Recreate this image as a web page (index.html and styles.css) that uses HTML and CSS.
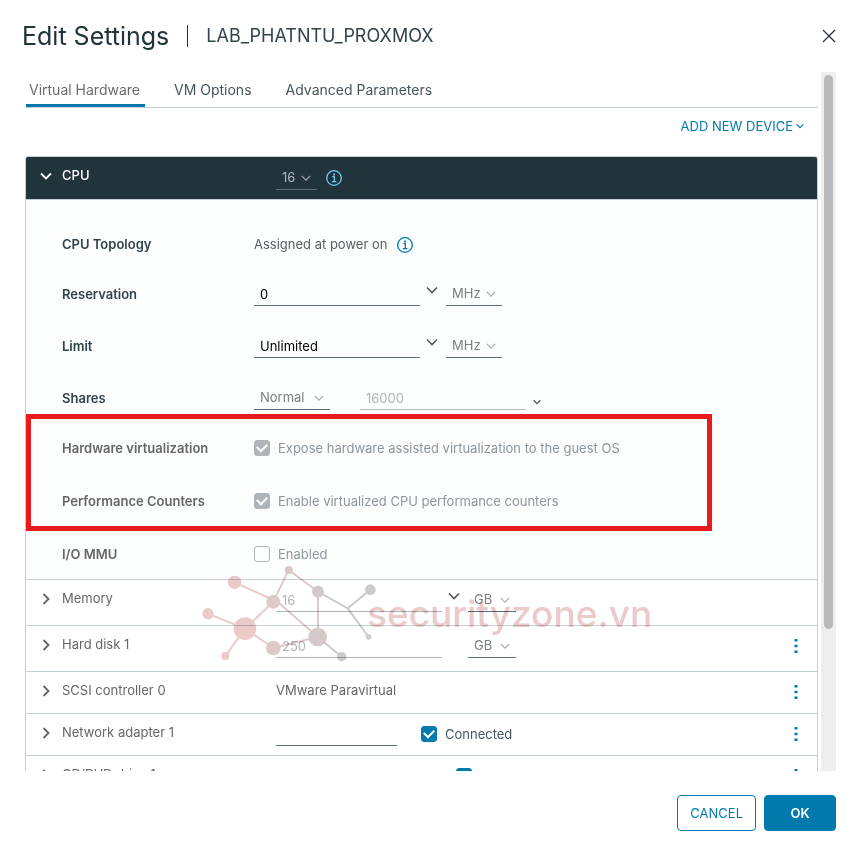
FILE: index.html
```html
<!DOCTYPE html>
<html lang="en">
<head>
<meta charset="utf-8">
<title>Edit Settings</title>
<meta name="viewport" content="width=device-width, initial-scale=1">
<link rel="stylesheet" href="styles.css">
</head>
<body>
<svg class="defs" aria-hidden="true">
  <symbol id="chev" viewBox="0 0 12 12"><path d="M1 3.5 6 8.5 11 3.5"/></symbol>
  <symbol id="info" viewBox="0 0 16 16"><circle cx="8" cy="8" r="7.3"/><path d="M6.3 6.7H8.3V11.5M5.8 11.6H10.4"/><path class="dot" d="M7.2 3.6h1.8v1.8h-1.8z"/></symbol>
  <symbol id="dots" viewBox="0 0 4 16"><path d="M.5 1h3v2.4h-3zM.5 6.8h3v2.4h-3zM.5 12.6h3v2.4h-3z"/></symbol>
</svg>
<main class="dialog">
  <header class="head">
    <h1>Edit Settings</h1>
    <h2>LAB_PHATNTU_PROXMOX</h2>
    <button class="close" aria-label="Close"><svg viewBox="0 0 14 14"><path d="M1 1 13 13M13 1 1 13"/></svg></button>
  </header>

  <div class="body">
    <div class="content">
      <nav class="tabs">
        <button class="tab active">Virtual Hardware</button>
        <button class="tab">VM Options</button>
        <button class="tab">Advanced Parameters</button>
      </nav>
      <div class="toolbar">
        <button class="add">ADD NEW DEVICE <svg class="chev"><use href="#chev"/></svg></button>
      </div>

      <div class="devices">
        <section class="row cpu">
          <button class="expand open"><svg class="chev"><use href="#chev"/></svg>CPU</button>
          <div class="value">
            <span class="pick w-count"><select aria-label="CPU count"><option>16</option></select><svg class="chev"><use href="#chev"/></svg></span>
            <svg class="info"><use href="#info"/></svg>
          </div>
        </section>

        <section class="panel">
          <div class="group">
            <div class="field"><span class="name">CPU Topology</span><span>Assigned at power on</span><svg class="info"><use href="#info"/></svg></div>
          </div>
          <div class="group limits">
            <div class="field">
              <label class="name" for="res">Reservation</label>
              <input class="text" id="res" value="0">
              <button class="drop" aria-label="Reservation values"><svg class="chev"><use href="#chev"/></svg></button>
              <span class="pick w-mhz"><select aria-label="Reservation unit"><option>MHz</option></select><svg class="chev"><use href="#chev"/></svg></span>
            </div>
            <div class="field">
              <label class="name" for="lim">Limit</label>
              <input class="text" id="lim" value="Unlimited">
              <button class="drop" aria-label="Limit values"><svg class="chev"><use href="#chev"/></svg></button>
              <span class="pick w-mhz"><select aria-label="Limit unit"><option>MHz</option></select><svg class="chev"><use href="#chev"/></svg></span>
            </div>
            <div class="field shares">
              <label class="name" for="shr">Shares</label>
              <span class="pick w-level"><select id="shr"><option>Normal</option></select><svg class="chev"><use href="#chev"/></svg></span>
              <input class="text" aria-label="Share value" value="16000" disabled>
              <button class="drop small" aria-label="Share values"><svg class="chev"><use href="#chev"/></svg></button>
            </div>
          </div>
          <div class="group checks">
            <div class="field"><span class="name">Hardware virtualization</span><label class="check"><input type="checkbox" checked disabled>Expose hardware assisted virtualization to the guest OS</label></div>
            <div class="field"><span class="name">Performance Counters</span><label class="check"><input type="checkbox" checked disabled>Enable virtualized CPU performance counters</label></div>
            <div class="field"><span class="name">I/O MMU</span><label class="check"><input type="checkbox" disabled>Enabled</label></div>
            <div class="highlight"></div>
          </div>
        </section>

        <section class="row tall">
          <button class="expand"><svg class="chev"><use href="#chev"/></svg>Memory</button>
          <div class="value">
            <input class="text" aria-label="Memory size" value="16" disabled>
            <button class="drop" aria-label="Memory values"><svg class="chev"><use href="#chev"/></svg></button>
            <span class="pick w-gb"><select aria-label="Memory unit"><option>GB</option></select><svg class="chev"><use href="#chev"/></svg></span>
          </div>
          <div class="watermark">
            <svg viewBox="36 78 525 288" aria-hidden="true">
              <g class="pink">
                <path d="M134 127 250 180M54 221 165 266 106 348M165 266 250 185M165 266 250 324"/>
                <circle cx="134" cy="127" r="20"/><circle cx="54" cy="221" r="17"/><circle cx="165" cy="266" r="34"/><circle cx="106" cy="348" r="12"/>
              </g>
              <g class="mauve">
                <path d="M250 185 296 90 384 155V291L250 175M250 324 383 291"/>
                <circle cx="296" cy="90" r="12"/><circle cx="250" cy="185" r="21"/><circle cx="250" cy="324" r="22"/>
              </g>
              <g class="gray">
                <path d="M384 155 473 205 541 149M473 205 536 291M383 291 455 350"/>
                <circle cx="541" cy="149" r="16"/><circle cx="536" cy="291" r="8"/><circle cx="455" cy="350" r="14"/>
              </g>
              <g class="mix"><circle cx="384" cy="155" r="18"/><circle cx="383" cy="291" r="28"/></g>
            </svg>
            <span>securityzone.vn</span>
          </div>
        </section>

        <section class="row tall">
          <button class="expand"><svg class="chev"><use href="#chev"/></svg>Hard disk 1</button>
          <div class="value">
            <input class="text disk" aria-label="Disk size" value="250" disabled>
            <span class="pick w-gb"><select aria-label="Disk unit"><option>GB</option></select><svg class="chev"><use href="#chev"/></svg></span>
          </div>
          <button class="more" aria-label="Hard disk actions"><svg><use href="#dots"/></svg></button>
        </section>

        <section class="row">
          <button class="expand"><svg class="chev"><use href="#chev"/></svg>SCSI controller 0</button>
          <div class="value plain">VMware Paravirtual</div>
          <button class="more" aria-label="SCSI controller actions"><svg><use href="#dots"/></svg></button>
        </section>

        <section class="row">
          <button class="expand"><svg class="chev"><use href="#chev"/></svg>Network adapter 1</button>
          <div class="value">
            <input class="text net" aria-label="Network">
            <label class="check"><input type="checkbox" checked>Connected</label>
          </div>
          <button class="more" aria-label="Network adapter actions"><svg><use href="#dots"/></svg></button>
        </section>

        <section class="row">
          <button class="expand"><svg class="chev"><use href="#chev"/></svg>CD/DVD drive 1</button>
          <div class="value media"><label class="check"><input type="checkbox" checked aria-label="CD/DVD connected"></label></div>
          <button class="more" aria-label="CD/DVD drive actions"><svg><use href="#dots"/></svg></button>
        </section>
      </div>
    </div>
    <div class="scrollbar"><div class="thumb"></div></div>
  </div>

  <footer class="foot">
    <button class="btn">CANCEL</button>
    <button class="btn primary">OK</button>
  </footer>
</main>
</body>
</html>
```
FILE: styles.css
```css
* { box-sizing: border-box; }
body {
  margin: 0;
  font: 13px/20px Inter, "Open Sans", sans-serif;
  color: #565f64;
  background: #fff;
}
button, input, select { font: inherit; color: inherit; }
button { border: 0; background: none; padding: 0; cursor: pointer; }
svg { fill: none; stroke: currentColor; flex: none; }
.defs { position: absolute; width: 0; height: 0; }
.chev { width: 12px; height: 12px; stroke-width: 1.4; }
.info { width: 16px; height: 16px; color: #0079ad; stroke-width: 1.3; }
.dot { fill: currentColor; stroke: none; }

.dialog { display: flex; flex-direction: column; height: 100vh; }

.head {
  display: flex;
  align-items: center;
  flex: none;
  height: 72px;
  padding: 0 20px 0 22px;
  color: #21333b;
}
h1, h2 { margin: 0; font-weight: 400; }
h1 { font-size: 25px; line-height: 32px; padding-right: 18px; }
h2 { font-size: 18px; line-height: 22px; padding-left: 18px; border-left: 1px solid #21333b; color: #31434b; }
.close { margin-left: auto; width: 14px; height: 14px; }
.close svg { display: block; width: 14px; height: 14px; stroke-width: 1.2; }

.body { display: flex; flex: 1; min-height: 0; padding: 0 20px 0 25px; overflow: hidden; }
.content { flex: 1; min-width: 0; overflow: hidden; }

.tabs { display: flex; gap: 26px; height: 36px; padding-left: 1px; border-bottom: 1px solid #c5d0d5; }
.tab { padding: 3px 5px 0 3px; font-size: 14px; color: #45565e; border-bottom: 3px solid transparent; }
.tab.active { color: #6c6c6c; border-bottom-color: #0079ad; }

.toolbar { display: flex; justify-content: flex-end; align-items: center; height: 48px; padding: 0 14px 12px; }
.add { display: flex; align-items: center; gap: 3px; color: #0079ad; }
.add .chev { width: 8px; height: 8px; stroke-width: 1.8; }

.devices { border: 1px solid #c5d0d5; border-bottom: 0; border-radius: 3px 3px 0 0; }
.row {
  position: relative;
  display: flex;
  align-items: flex-start;
  min-height: 42px;
  border-bottom: 1px solid #c5d0d5;
}
.row.tall { min-height: 46px; }
.row.cpu { min-height: 43px; background: #21333b; border-radius: 2px 2px 0 0; }
.expand {
  display: flex;
  align-items: center;
  gap: 10px;
  width: 250px;
  height: 36px;
  padding-left: 14px;
  color: #666;
}
.expand .chev { margin-top: 2px; transform: rotate(-90deg); stroke-width: 1.8; }
.expand.open .chev { transform: none; }
.cpu .expand { color: #fff; font-weight: 500; }
.value { display: flex; align-items: center; height: 24px; margin-top: 8px; }
.value.plain { height: 20px; color: #666; }
.value.media { padding-left: 180px; }
.cpu .value { gap: 9px; margin-top: 9px; color: #b0b8bc; }
.cpu .info { color: #6fcdf5; }
.more { margin: 12px 19px 0 auto; width: 4px; height: 16px; color: #0079ad; }
.more svg { display: block; width: 4px; height: 16px; fill: currentColor; stroke: none; }

.text {
  width: 166px;
  height: 24px;
  padding: 0 6px;
  border: 0;
  border-bottom: 1px solid #5b6f79;
  border-radius: 0;
  background: none;
  color: #000;
  outline: 0;
}
.text:disabled { color: #b3b3b3; border-color: #aeb6ba; }
.disk { margin-right: 26px; }
.net { width: 121px; margin-right: 24px; }
.drop { width: 12px; height: 12px; margin: 0 8px 8px 6px; color: #565656; }
.drop .chev { display: block; stroke-width: 1.6; }
.drop.small { width: 8px; height: 8px; margin: 8px 0 0 7px; }
.small .chev { width: 8px; height: 8px; stroke-width: 2; }

.pick { position: relative; height: 24px; color: #7c8082; }
.pick select {
  appearance: none;
  display: block;
  width: 100%;
  height: 24px;
  padding: 0 0 2px 6px;
  border: 0;
  border-bottom: 1px solid #5b6f79;
  border-radius: 0;
  background: none;
}
.pick .chev { position: absolute; right: 6px; top: 7px; width: 10px; height: 10px; color: #aaa; pointer-events: none; }
.cpu .pick { color: inherit; }
.w-count { width: 41px; }
.w-mhz { width: 56px; }
.w-level { width: 76px; }
.w-gb { width: 48px; }

.panel {
  display: flex;
  flex-direction: column;
  gap: 26px;
  padding: 32px 36px 13px;
  background: #fcfdfd;
  border-bottom: 1px solid #c5d0d5;
}
.group { display: flex; flex-direction: column; }
.limits { gap: 28px; }
.checks { position: relative; gap: 29px; }
.field { display: flex; align-items: center; height: 24px; }
.name { width: 192px; font-weight: 600; color: #31434b; }
.checks .name { color: #666; }
.field > .info { margin: 2px 0 0 10px; }
.shares .w-level { margin-right: 30px; }

.check { display: flex; align-items: center; gap: 8px; color: #45565e; }
.check:has(:disabled) { color: #8c979d; }
.check input {
  appearance: none;
  display: grid;
  place-items: center;
  width: 16px;
  height: 16px;
  margin: 0;
  border: 1px solid #aeb8bc;
  border-radius: 3px;
}
.check input:checked { background: #0079ad; border-color: #0079ad; }
.check input:checked:disabled { background: #adb5ba; border-color: #adb5ba; }
.check input:checked::before {
  content: "";
  width: 8px;
  height: 5px;
  margin-bottom: 3px;
  border: solid #fff;
  border-width: 0 0 2px 2px;
  transform: rotate(-45deg);
}

.highlight {
  position: absolute;
  left: -36px;
  top: -22px;
  width: 686px;
  height: 117px;
  border: 5px solid #e81a1c;
  pointer-events: none;
}
.watermark {
  position: absolute;
  z-index: 1;
  left: 176px;
  top: -14px;
  display: flex;
  mix-blend-mode: multiply;
  pointer-events: none;
}
.watermark svg { width: 175px; height: 96px; stroke-width: 6; }
.watermark circle { fill: currentColor; stroke: none; }
.watermark span { margin: 25px 0 0 -10px; font-size: 37px; line-height: 46px; font-weight: 500; color: #ebcaca; }
.pink { color: #ebcaca; }
.mauve { color: #dec9c9; }
.gray { color: #cbcbcb; }
.mix { color: #d3c9c9; }

.scrollbar { flex: none; width: 15px; margin-left: 3px; padding: 3px; background: #eee; }
.thumb { height: 80%; border-radius: 5px; background: #bababa; }

.foot { display: flex; justify-content: flex-end; gap: 8px; flex: none; padding: 24px 20px 23px; }
.btn { min-width: 72px; height: 36px; padding: 0 12px; border: 1px solid #0079ad; border-radius: 4px; color: #0079ad; }
.btn.primary { background: #0079ad; color: #fff; font-weight: 600; }
```
